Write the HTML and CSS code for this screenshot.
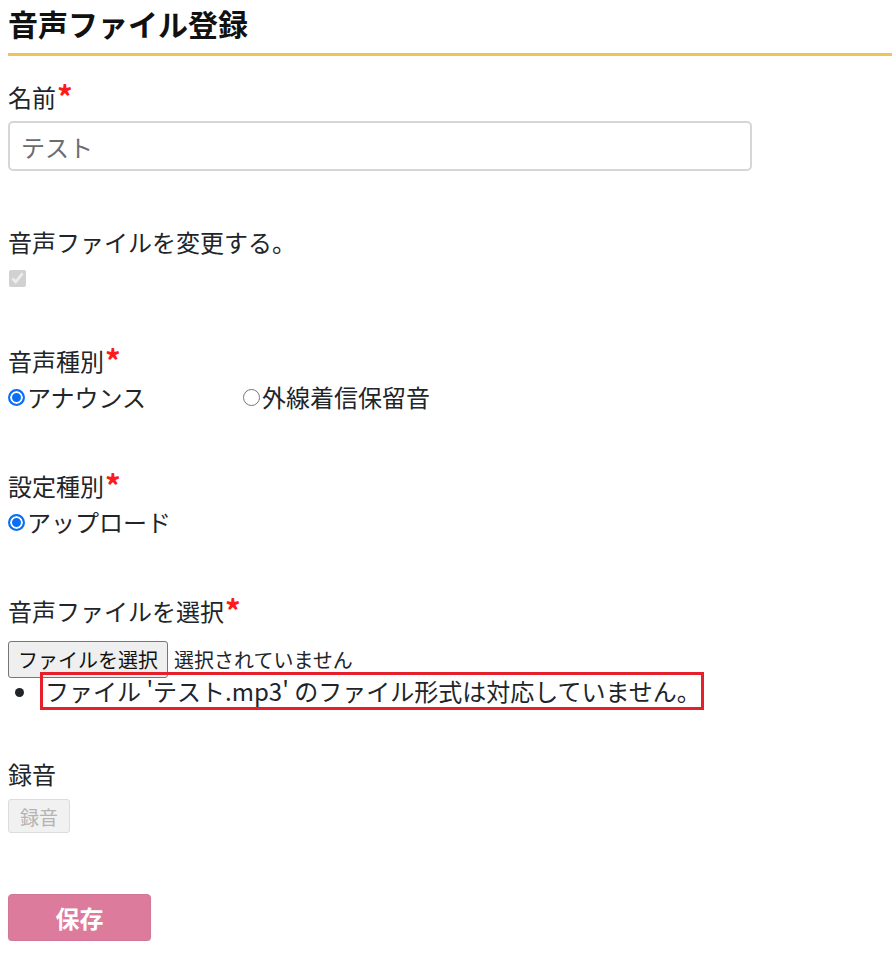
FILE: index.html
```html
<!DOCTYPE html>
<html lang="ja">

<head>
    <meta charset="UTF-8">
    <meta name="viewport" content="width=device-width, initial-scale=1.0">
    <title>音声ファイル登録</title>
    <link rel="stylesheet" href="styles.css">
</head>

<body>
    <h1 class="page-title">音声ファイル登録</h1>

    <form class="voice-form">
        <div class="form-group group-name">
            <label class="form-label" for="name">名前<span class="required">*</span></label>
            <input type="text" id="name" class="text-input" placeholder="テスト">
        </div>

        <div class="form-group group-change">
            <div class="form-label">音声ファイルを変更する。</div>
            <input type="checkbox" class="change-check" checked disabled>
        </div>

        <div class="form-group group-type">
            <div class="form-label">音声種別<span class="required">*</span></div>
            <div class="radio-row">
                <label class="radio-option"><input type="radio" name="voiceType" checked>アナウンス</label>
                <label class="radio-option"><input type="radio" name="voiceType">外線着信保留音</label>
            </div>
        </div>

        <div class="form-group group-setting">
            <div class="form-label">設定種別<span class="required">*</span></div>
            <div class="radio-row">
                <label class="radio-option"><input type="radio" name="settingType" checked>アップロード</label>
            </div>
        </div>

        <div class="form-group group-file">
            <div class="form-label">音声ファイルを選択<span class="required">*</span></div>
            <div class="file-row">
                <button type="button" class="file-button">ファイルを選択</button>
                <span class="file-name">選択されていません</span>
            </div>
            <ul class="error-list">
                <li><span class="error-text">ファイル 'テスト.mp3' のファイル形式は対応していません。</span></li>
            </ul>
        </div>

        <div class="form-group group-record">
            <div class="form-label">録音</div>
            <button type="button" class="record-button" disabled>録音</button>
        </div>

        <button type="button" class="save-button">保存</button>
    </form>
</body>

</html>
```

FILE: styles.css
```css
body {
    margin: 0;
    padding: 5px 0 0 8px;
    font-family: "Noto Sans CJK JP", "Noto Sans", sans-serif;
    color: #212529;
    background: #fff;
}

.page-title {
    margin: 0;
    padding-bottom: 12px;
    font-size: 30px;
    line-height: 36px;
    font-weight: 700;
    color: #111;
    border-bottom: 3px solid #f0c35a;
}

.form-label {
    display: block;
    font-size: 24px;
    line-height: 36px;
}

.required {
    color: #ff1a1a;
    font-weight: 700;
    font-size: 31px;
    line-height: 1;
    margin-left: 1px;
    vertical-align: -2px;
}

.group-name {
    margin-top: 23px;
}

.text-input {
    display: block;
    box-sizing: border-box;
    width: 744px;
    height: 50px;
    margin-top: 6px;
    padding: 0 11px;
    font-family: inherit;
    font-size: 24px;
    border: 2px solid #d6d6d6;
    border-radius: 5px;
    outline: none;
}

.text-input::placeholder {
    color: #6c6c6c;
}

.group-change {
    margin-top: 53px;
}

.change-check {
    display: block;
    width: 17px;
    height: 17px;
    margin: 10px 0 0 1px;
}

.group-type {
    margin-top: 56px;
}

.radio-row {
    display: flex;
    font-size: 24px;
    line-height: 36px;
}

.radio-option {
    display: flex;
    align-items: center;
    width: 235px;
}

.radio-option input {
    appearance: none;
    flex: none;
    box-sizing: border-box;
    width: 17px;
    height: 17px;
    margin: 1px 2px 0 0;
    border: 1.5px solid #767676;
    border-radius: 50%;
    background: #fff;
}

.radio-option input:checked {
    border: 2px solid #0b6ff5;
    background: #0b6ff5;
    box-shadow: inset 0 0 0 2px #fff;
}

.group-setting {
    margin-top: 53px;
}

.group-file {
    margin-top: 53px;
}

.file-row {
    display: flex;
    align-items: center;
    margin-top: 12px;
    font-size: 20px;
}

.file-button {
    box-sizing: border-box;
    width: 160px;
    height: 37px;
    padding: 0;
    font-family: inherit;
    font-size: 20px;
    color: #111;
    background: #efefef;
    border: 1px solid #767676;
    border-radius: 3px;
}

.file-name {
    margin-left: 6px;
}

.error-list {
    margin: -6px 0 0;
    padding-left: 32px;
    font-size: 24px;
    line-height: 32px;
}

.error-text {
    display: inline-block;
    padding: 0 0 0 2px;
    border: 3px solid #e5202b;
}

.group-record {
    margin-top: 46px;
}

.record-button {
    display: block;
    box-sizing: border-box;
    width: 62px;
    height: 34px;
    margin-top: 7px;
    padding: 0;
    font-family: inherit;
    font-size: 19px;
    color: #b4b4b4;
    background: #f1f1f1;
    border: 1px solid #dcdcdc;
    border-radius: 3px;
}

.save-button {
    display: block;
    width: 143px;
    height: 47px;
    margin-top: 61px;
    font-family: inherit;
    font-size: 24px;
    font-weight: 700;
    color: #fff;
    background: #dc7b9b;
    border: 1px solid #d3779a;
    border-radius: 4px;
    box-shadow: 0 1px 1px rgba(0, 0, 0, 0.15);
}
```
